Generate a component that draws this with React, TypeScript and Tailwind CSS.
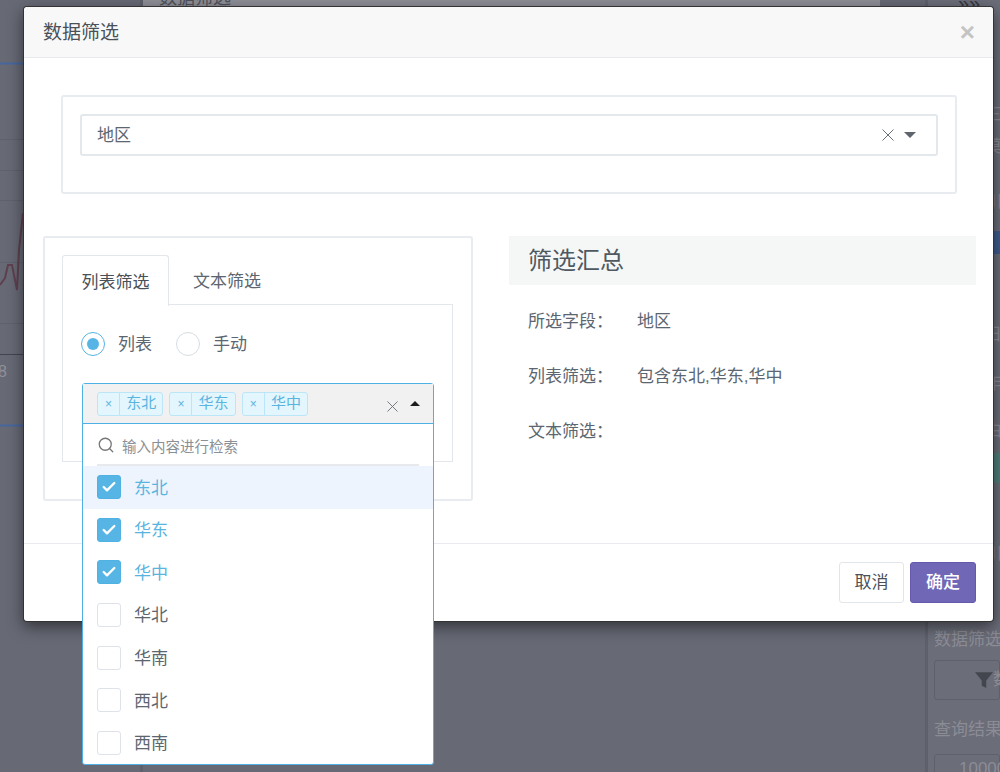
import { Check, Search } from "lucide-react";

const FONT = "font-['Liberation_Sans','Noto_Sans_CJK_SC',sans-serif]";

function CrossIcon({ className }: { className?: string }) {
  return (
    <svg viewBox="0 0 12 12" className={className} fill="none" stroke="currentColor" strokeWidth="1">
      <path d="M0.5 0.5 L11.5 11.5 M11.5 0.5 L0.5 11.5" />
    </svg>
  );
}

function Tag({ label }: { label: string }) {
  return (
    <div className="flex h-6 items-center rounded-[3px] border border-[#bce6f8] bg-[#e3f5fd] text-[15px] text-[#5ab4e0]">
      <span className="flex h-full w-[22px] items-center justify-center border-r border-[#bce6f8] text-xs">×</span>
      <span className="px-[6.2px]">{label}</span>
    </div>
  );
}

function Option({ label, checked, active }: { label: string; checked?: boolean; active?: boolean }) {
  return (
    <div className={`flex h-[42.6px] items-center gap-[13px] px-[14px] text-[17px] ${active ? "bg-[#edf4fd]" : ""} ${checked ? "text-[#5ab4e0]" : "text-[#5c6670]"}`}>
      <span className={`flex h-6 w-6 items-center justify-center rounded-[3px] border ${checked ? "border-[#4fb2e3] bg-[#56b5e4]" : "border-[#dde3e8] bg-white"}`}>
        {checked && <Check className="h-4 w-4 text-white" strokeWidth={3.5} />}
      </span>
      <span className="pt-[2px]">{label}</span>
    </div>
  );
}

function SummaryRow({ label, value }: { label: string; value?: string }) {
  return (
    <div className="flex h-[55px] items-center text-[17px] text-[#5c6670]">
      <span className="w-[109px]">{label}</span>
      <span>{value}</span>
    </div>
  );
}

function BackgroundChart() {
  return (
    <svg width="140" height="772" className="shrink-0" viewBox="0 0 140 772">
      <line x1="0" x2="140" y1="63.5" y2="63.5" stroke="#47689f" strokeWidth="2" />
      {[139.5, 170.5, 200.5, 262.5, 323.5].map((y) => (
        <line key={y} x1="0" x2="140" y1={y} y2={y} stroke="#5f616d" />
      ))}
      <line x1="0" x2="140" y1="354.5" y2="354.5" stroke="#43454e" />
      <line x1="0" x2="140" y1="425.5" y2="425.5" stroke="#47689f" strokeWidth="2" />
      <path d="M0 285 L5 278 L8 265 L12 265 L17 290 L19 250 L23 213" fill="none" stroke="#5f4050" strokeWidth="2" />
      <text x="-2" y="377" fontSize="16" fill="#8f9099">8</text>
    </svg>
  );
}

function BackgroundSide() {
  return (
    <div className="flex h-[772px] w-[75px] shrink-0 flex-col overflow-hidden whitespace-nowrap border-l-[3px] border-[#5e606b] bg-[#6b6d79] pl-[6px] text-[17px] text-[#8b8c95]">
      <div className="ml-[24px] h-[105px] shrink-0 text-xl leading-[6px] text-[#33353c]">»»</div>
      <div className="h-[32px] shrink-0 leading-[20px]">字段名三</div>
      <div className="h-[55px] shrink-0 leading-[20px]">字段名莫</div>
      <div className="h-[39px] shrink-0 leading-[20px]">字段名川</div>
      <div className="ml-[54px] h-[23px] shrink-0 bg-[#3f5c8f]" />
      <div className="h-[71px] shrink-0" />
      <div className="h-[49px] shrink-0 leading-[20px]">字段名日</div>
      <div className="h-[47px] shrink-0 leading-[20px]">字段名年</div>
      <div className="h-[32px] shrink-0 leading-[20px]">字段名由</div>
      <div className="ml-[54px] h-[30px] shrink-0 bg-[#4f7f7c]" />
      <div className="h-[61px] shrink-0" />
      <div className="h-[86px] shrink-0 leading-[20px]">字段名川</div>
      <div className="h-[30px] shrink-0 leading-[20px]">数据筛选</div>
      <div className="mb-[20px] flex h-10 shrink-0 items-center rounded-[3px] border border-[#5e606b] pl-10">
        <svg viewBox="0 0 16 16" className="h-[18px] w-[18px] shrink-0 fill-[#44464f]">
          <path d="M0 1h16L10 8.5V15l-4-2V8.5z" />
        </svg>
        <span>数据</span>
      </div>
      <div className="h-[34px] shrink-0 leading-[20px]">查询结果</div>
      <div className="h-10 shrink-0 rounded-[3px] border border-[#5e606b] pl-6 pt-[1px]">10000</div>
    </div>
  );
}

export default function App() {
  return (
    <div className={`relative h-[772px] w-[1000px] overflow-hidden bg-[#676975] ${FONT}`}>
      {/* dimmed page behind the dialog */}
      <div className="flex h-full">
        <BackgroundChart />
        <div className="h-[772px] w-[3px] shrink-0 bg-[#5e606b]" />
        <div className="h-full flex-1">
          <div className="h-2 w-[737px] overflow-hidden bg-[#8e8f97] pl-4">
            <div className="mt-[-12px] text-lg leading-[20px] text-[#50525a]">数据筛选</div>
          </div>
        </div>
        <BackgroundSide />
      </div>

      {/* dialog */}
      <div className="absolute left-[23px] top-[6px] flex h-[616px] w-[971px] flex-col rounded-[4px] border border-black/80 bg-white shadow-[0_5px_15px_rgba(0,0,0,0.5)]">
        <div className="flex h-[51px] shrink-0 items-center justify-between rounded-t-[4px] border-b border-[#e8eaed] bg-[#f8f8f8] pl-[19px] pr-[18px]">
          <span className="pt-[2px] text-[19px] text-[#4a5058]">数据筛选</span>
          <span className="text-[26px] font-bold leading-none text-[#c4c4c4]">×</span>
        </div>

        <div className="flex-1 pl-[19px] pr-[17px] pt-[37px]">
          <div className="ml-[18px] mr-[19px] h-[99px] rounded-[3px] border-2 border-[#e8ebef] px-[17px] pt-[17px]">
            <div className="flex h-[42px] items-center justify-between rounded-[3px] border-2 border-[#e3e8ec] pl-[15px] pr-[20px] text-[17px] text-[#5c6670]">
              <span className="pt-[1px]">地区</span>
              <div className="flex items-center gap-[10px]">
                <CrossIcon className="h-[12px] w-[12px] text-[#6a7078]" />
                <span className="h-0 w-0 border-x-[6px] border-t-[6px] border-x-transparent border-t-[#5f656d]" />
              </div>
            </div>
          </div>

          <div className="mt-[42px] flex gap-[36px]">
            <div className="relative h-[265px] w-[430px] shrink-0 rounded-[3px] border-2 border-[#e8ebef] pl-[17px] pr-[18px] pt-[17px]">
              <div className="flex h-[50px] items-stretch">
                <div className="relative z-10 flex h-[51px] w-[107px] items-center justify-center rounded-t-[3px] border border-b-0 border-[#e3e6ea] bg-white pt-[3px] text-[17px] text-[#4a5058]">列表筛选</div>
                <div className="flex flex-1 items-center border-b border-[#e3e6ea] pl-6 pt-[4px] text-[17px] text-[#5c6670]">文本筛选</div>
              </div>
              <div className="h-[157px] border border-t-0 border-[#e3e6ea] px-[18px] pt-[27px]">
                <div className="flex h-6 items-center text-[17px] text-[#5c6670]">
                  <span className="flex h-6 w-6 items-center justify-center rounded-full border border-[#56b5e4]">
                    <span className="h-3 w-3 rounded-full bg-[#56b5e4]" />
                  </span>
                  <span className="ml-[13px] pt-[1px]">列表</span>
                  <span className="ml-[24px] h-6 w-6 rounded-full border border-[#d5dde2]" />
                  <span className="ml-[13px] pt-[1px]">手动</span>
                </div>
              </div>

              {/* open multi-select, over the dialog's edge */}
              <div className="absolute left-[37px] top-[145px] z-20 w-[352px] rounded-[3px] border border-[#4fb0e6] bg-white">
                <div className="flex h-10 items-center border-b border-[#4fb0e6] bg-[#f1f1f1] pl-[14px] pr-[13px]">
                  <div className="flex gap-[6px]">
                    <Tag label="东北" />
                    <Tag label="华东" />
                    <Tag label="华中" />
                  </div>
                  <CrossIcon className="ml-auto mt-[5px] h-[11px] w-[11px] text-[#6a7078]" />
                  <span className="ml-[12px] h-0 w-0 border-x-[5px] border-b-[5px] border-x-transparent border-b-[#1c1c1c]" />
                </div>
                <div className="mx-[14px] flex h-[42px] items-center gap-[7px] border-b-2 border-[#e8e9ec] pt-[2px] text-[14.5px] text-[#8a8f95]">
                  <Search className="h-[18px] w-[18px] text-[#777]" strokeWidth={1.75} />
                  <span className="pt-[5px]">输入内容进行检索</span>
                </div>
                <div>
                  <Option label="东北" checked active />
                  <Option label="华东" checked />
                  <Option label="华中" checked />
                  <Option label="华北" />
                  <Option label="华南" />
                  <Option label="西北" />
                  <Option label="西南" />
                </div>
              </div>
            </div>

            <div className="flex-1">
              <div className="flex h-[49px] items-center bg-[#f5f7f7] pl-[19px] text-[24px] text-[#4f5962]">筛选汇总</div>
              <div className="mt-[9px] pl-[19px]">
                <SummaryRow label="所选字段：" value="地区" />
                <SummaryRow label="列表筛选：" value="包含东北,华东,华中" />
                <SummaryRow label="文本筛选：" />
              </div>
            </div>
          </div>
        </div>

        <div className="flex h-[78px] shrink-0 items-start justify-end gap-[6px] border-t border-[#e8eaed] pr-[17px] pt-[18px]">
          <button className="h-[41px] w-[65px] rounded-[3px] border border-[#e1e6ea] bg-white text-[17px] text-[#4a5058]">取消</button>
          <button className="h-[41px] w-[66px] rounded-[3px] border border-[#6558ad] bg-[#7068b6] text-[17px] font-medium text-white">确定</button>
        </div>
      </div>
    </div>
  );
}
